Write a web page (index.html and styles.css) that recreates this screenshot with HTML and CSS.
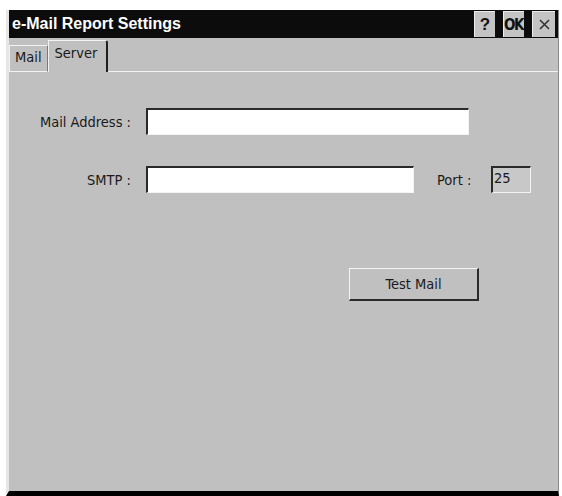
FILE: index.html
```html
<!DOCTYPE html>
<html lang="en">
<head>
    <meta charset="UTF-8">
    <title>e-Mail Report Settings</title>
    <link rel="stylesheet" href="styles.css">
</head>
<body>
    <div class="window">
        <!-- Title bar -->
        <div class="title-bar">
            <span class="title">e-Mail Report Settings</span>
            <div class="title-buttons">
                <button class="title-btn help">?</button>
                <button class="title-btn ok">OK</button>
                <button class="title-btn close">
                    <svg width="11" height="11" viewBox="0 0 11 11">
                        <path d="M1 1 L10 10 M10 1 L1 10" stroke="#333" stroke-width="1.6" fill="none"/>
                    </svg>
                </button>
            </div>
        </div>

        <!-- Tabs -->
        <div class="tab-strip">
            <div class="tab">Mail</div>
            <div class="tab active">Server</div>
            <div class="tab-fill"></div>
        </div>

        <!-- Server pane -->
        <div class="pane">
            <div class="form-row">
                <label class="field-label">Mail Address :</label>
                <div class="text-box address"></div>
            </div>
            <div class="form-row">
                <label class="field-label">SMTP :</label>
                <div class="text-box smtp"></div>
                <label class="port-label">Port :</label>
                <div class="text-box port">25</div>
            </div>
            <div class="action-row">
                <button class="push-button">Test Mail</button>
            </div>
        </div>
    </div>
</body>
</html>
```

FILE: styles.css
```css
/* General Reset */
* {
    margin: 0;
    padding: 0;
    box-sizing: border-box;
}

body {
    font-family: 'DejaVu Sans Condensed', 'Liberation Sans', sans-serif;
    background-color: #ffffff;
    color: #1a1a1a;
    font-size: 14px;
}

.window {
    margin: 10px 3px 0 6px;
    height: 486px;
    display: flex;
    flex-direction: column;
    background: #c0c0c0;
    border-left: 3px solid #e6e6e6;
    border-bottom: 5px solid #000;
    border-right: 1px solid #8a8a8a;
}

/* Title bar */
.title-bar {
    height: 28px;
    background: #0c0c0c;
    display: flex;
    align-items: center;
    justify-content: space-between;
    padding-left: 3px;
}

.title {
    font-family: 'Liberation Sans', sans-serif;
    font-weight: bold;
    font-size: 16px;
    color: #fff;
}

.title-buttons {
    display: flex;
    gap: 8px;
    padding-right: 3px;
    height: 100%;
    align-items: center;
}

.title-btn {
    width: 21px;
    height: 26px;
    padding: 0;
    border: none;
    border-top: 1px solid #eee;
    border-left: 1px solid #eee;
    background: #c4c4c4;
    font-family: 'Liberation Sans', sans-serif;
    font-weight: bold;
    color: #111;
    display: flex;
    align-items: center;
    justify-content: center;
}

.title-btn.help {
    font-size: 17px;
}

.title-btn.ok {
    font-family: 'DejaVu Sans Condensed', sans-serif;
    font-size: 15px;
    letter-spacing: -1.5px;
    padding-right: 1px;
}

.title-btn.close {
    width: 23px;
}

/* Tabs */
.tab-strip {
    display: flex;
    align-items: flex-end;
    height: 34px;
}

.tab {
    height: 27px;
    padding: 3px 5px 0 5px;
    border-top: 1px solid #f2f2f2;
    border-left: 1px solid #f2f2f2;
    border-right: 1px solid #7a7a7a;
    border-bottom: 1px solid #f2f2f2;
    font-size: 14.5px;
}

.tab.active {
    height: 32px;
    padding: 4px 9px 0 6px;
    border-right: 2px solid #202020;
    border-bottom: none;
    border-top-right-radius: 3px;
}

.tab-fill {
    flex: 1;
    border-bottom: 1px solid #f2f2f2;
    height: 1px;
}

.pane {
    flex: 1;
    padding-top: 36px;
    display: flex;
    flex-direction: column;
    gap: 31px;
}

.form-row {
    display: flex;
    align-items: center;
    height: 27px;
}

.field-label {
    width: 122px;
    text-align: right;
    margin-right: 15px;
    font-size: 14.5px;
}

.text-box {
    height: 27px;
    background: #fff;
    border-top: 2px solid #2a2a2a;
    border-left: 2px solid #2a2a2a;
    border-right: 1px solid #f4f4f4;
    border-bottom: 1px solid #f4f4f4;
}

.text-box.address {
    width: 323px;
}

.text-box.smtp {
    width: 268px;
}

.port-label {
    margin-left: 23px;
    width: 54px;
    font-size: 14.5px;
}

.text-box.port {
    width: 40px;
    background: #c8c8c8;
    padding: 2px 0 0 1px;
    font-size: 14.5px;
}

.action-row {
    margin-top: 44px;
    padding-left: 340px;
}

.push-button {
    width: 130px;
    height: 33px;
    background: #c0c0c0;
    border-top: 1px solid #f4f4f4;
    border-left: 1px solid #f4f4f4;
    border-right: 2px solid #2a2a2a;
    border-bottom: 2px solid #2a2a2a;
    font-family: 'DejaVu Sans Condensed', 'Liberation Sans', sans-serif;
    font-size: 14.5px;
    color: #1a1a1a;
}
```
